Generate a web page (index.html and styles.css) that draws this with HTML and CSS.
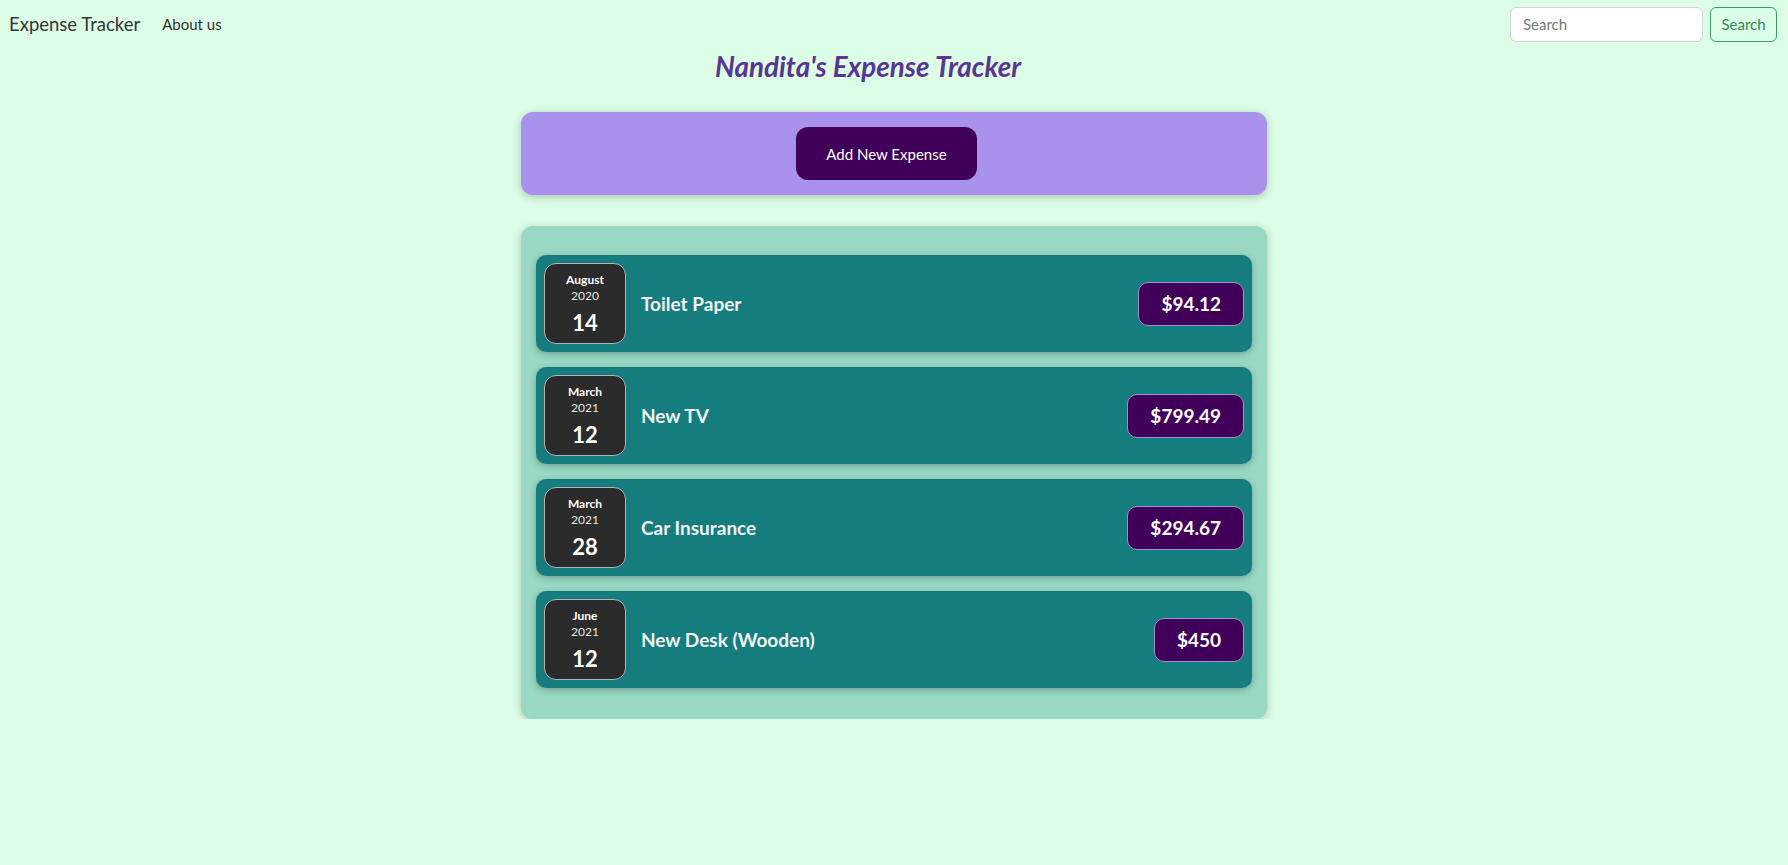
FILE: index.html
```html
<!DOCTYPE html>
<html lang="en">
<head>
<meta charset="utf-8">
<title>Expense Tracker</title>
<link rel="stylesheet" href="styles.css">
</head>
<body>
<nav class="navbar">
  <div class="nav-left">
    <a class="brand" href="#">Expense Tracker</a>
    <a class="nav-link" href="#">About us</a>
  </div>
  <form class="search-form">
    <input class="search-input" type="search" placeholder="Search">
    <button class="search-btn" type="button">Search</button>
  </form>
</nav>
<h1 class="page-title">Nandita's Expense Tracker</h1>
<main class="main">
  <section class="new-expense">
    <button class="add-btn" type="button">Add New Expense</button>
  </section>
  <section class="expenses">
    <div class="expense-item">
      <div class="date">
        <div class="date-month">August</div>
        <div class="date-year">2020</div>
        <div class="date-day">14</div>
      </div>
      <h2 class="expense-title">Toilet Paper</h2>
      <div class="expense-price">$94.12</div>
    </div>
    <div class="expense-item">
      <div class="date">
        <div class="date-month">March</div>
        <div class="date-year">2021</div>
        <div class="date-day">12</div>
      </div>
      <h2 class="expense-title">New TV</h2>
      <div class="expense-price">$799.49</div>
    </div>
    <div class="expense-item">
      <div class="date">
        <div class="date-month">March</div>
        <div class="date-year">2021</div>
        <div class="date-day">28</div>
      </div>
      <h2 class="expense-title">Car Insurance</h2>
      <div class="expense-price">$294.67</div>
    </div>
    <div class="expense-item">
      <div class="date">
        <div class="date-month">June</div>
        <div class="date-year">2021</div>
        <div class="date-day">12</div>
      </div>
      <h2 class="expense-title">New Desk (Wooden)</h2>
      <div class="expense-price">$450</div>
    </div>
  </section>
</main>
</body>
</html>
```

FILE: styles.css
```css
* { box-sizing: border-box; }

body {
  margin: 0;
  background: #dcfde6;
  font-family: Lato, "Noto Sans", sans-serif;
  color: #333;
}

.navbar {
  display: flex;
  align-items: center;
  justify-content: space-between;
  padding: 6px 11px 0 9px;
  height: 42px;
}

.nav-left {
  display: flex;
  align-items: center;
}

.brand {
  font-size: 18.5px;
  color: #353535;
  text-decoration: none;
}

.nav-link {
  margin-left: 22px;
  font-size: 15px;
  color: #2f2f2f;
  text-decoration: none;
}

.search-form {
  display: flex;
  gap: 7px;
}

.search-input {
  width: 193px;
  height: 35px;
  border: 1px solid #cfd8d3;
  border-radius: 6px;
  background: #fff;
  padding: 0 12px;
  font-family: inherit;
  font-size: 15px;
  color: #333;
}

.search-input::placeholder { color: #777; }

.search-btn {
  width: 67px;
  height: 35px;
  border: 1px solid #3f9a68;
  border-radius: 6px;
  background: transparent;
  color: #2f8a58;
  font-family: inherit;
  font-size: 15px;
  padding: 0;
}

.page-title {
  margin: 9px 0 0;
  padding-right: 52px;
  text-align: center;
  font-size: 27.8px;
  line-height: 32px;
  font-style: italic;
  font-weight: 700;
  color: #5a3592;
}

.main {
  width: 746px;
  margin: 29px auto 0;
}

.new-expense {
  background: #a992ee;
  border-radius: 12px;
  padding: 15px 0;
  text-align: center;
  box-shadow: 0 2px 8px rgba(0, 0, 0, 0.22);
}

.add-btn {
  width: 181px;
  height: 53px;
  margin-right: 15px;
  border: none;
  border-radius: 12px;
  background: #40005a;
  color: #fff;
  font-family: inherit;
  font-size: 15px;
}

.expenses {
  margin-top: 31px;
  background: #99d8c2;
  border-radius: 12px;
  padding: 29px 15px 31px;
  display: flex;
  flex-direction: column;
  gap: 15px;
  box-shadow: 0 2px 8px rgba(0, 0, 0, 0.22);
}

.expense-item {
  display: flex;
  align-items: center;
  height: 97px;
  padding: 8px;
  background: #167d7e;
  border-radius: 10px;
  box-shadow: 0 2px 6px rgba(0, 0, 0, 0.25);
}

.date {
  width: 82px;
  height: 81px;
  padding-top: 3px;
  display: flex;
  flex-direction: column;
  align-items: center;
  justify-content: center;
  background: #2b2b2b;
  border: 1px solid #b5b5b5;
  border-radius: 12px;
  color: #fff;
}

.date-month {
  font-size: 12px;
  font-weight: 700;
  line-height: 16px;
}

.date-year {
  font-size: 12px;
  line-height: 16px;
  color: #e8e8e8;
}

.date-day {
  font-size: 22px;
  font-weight: 700;
  line-height: 30px;
  margin-top: 4px;
}

.expense-title {
  flex: 1;
  margin: 0 0 0 15px;
  font-size: 19px;
  font-weight: 700;
  color: #f2f2f2;
}

.expense-price {
  height: 44px;
  display: flex;
  align-items: center;
  padding: 0 22px;
  background: #40005a;
  border: 1px solid #a590c8;
  border-radius: 10px;
  color: #fff;
  font-size: 19px;
  font-weight: 700;
}
```
